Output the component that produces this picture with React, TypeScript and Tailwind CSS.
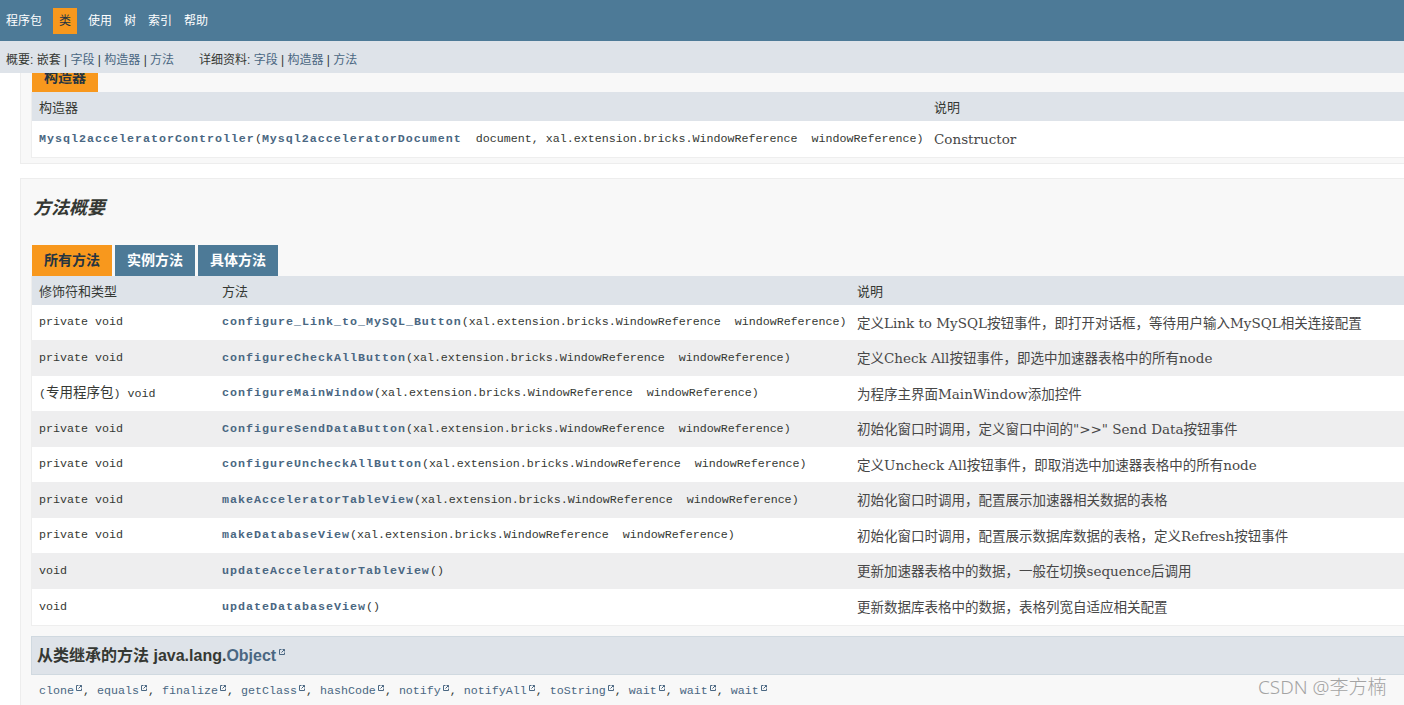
import React from "react";

const SANS = "font-['Liberation_Sans','Noto_Sans_CJK_SC',sans-serif]";
const MONO = "font-['Liberation_Mono','Noto_Sans_CJK_SC',monospace]";
const SERIF = "font-['DejaVu_Serif','Noto_Sans_CJK_SC',serif]";

const ExtIcon = ({ cls = "" }: { cls?: string }) => (
  <svg
    width="6"
    height="6"
    viewBox="0 0 6 6"
    fill="none"
    stroke="#4A6782"
    strokeWidth="1"
    className={"inline-block align-top " + cls}
  >
    <path d="M2.5 0.5H0.5V5.5H5.5V3.5" />
    <path d="M3.5 0.5H5.5V2.5" />
    <path d="M5.5 0.5L2.5 3.5" />
  </svg>
);

type Row = { type: string; name: string; params: string; desc: string; h: string; bg: string };

const P = "xal.extension.bricks.WindowReference  windowReference";

const rows: Row[] = [
  { type: "private void", name: "configure_Link_to_MySQL_Button", params: P, desc: "定义Link to MySQL按钮事件，即打开对话框，等待用户输入MySQL相关连接配置", h: "h-[35px]", bg: "bg-white" },
  { type: "private void", name: "configureCheckAllButton", params: P, desc: "定义Check All按钮事件，即选中加速器表格中的所有node", h: "h-[36px]", bg: "bg-[#eeeeef]" },
  { type: "(专用程序包) void", name: "configureMainWindow", params: P, desc: "为程序主界面MainWindow添加控件", h: "h-[35px]", bg: "bg-white" },
  { type: "private void", name: "ConfigureSendDataButton", params: P, desc: "初始化窗口时调用，定义窗口中间的\">>\" Send Data按钮事件", h: "h-[36px]", bg: "bg-[#eeeeef]" },
  { type: "private void", name: "configureUncheckAllButton", params: P, desc: "定义Uncheck All按钮事件，即取消选中加速器表格中的所有node", h: "h-[35px]", bg: "bg-white" },
  { type: "private void", name: "makeAcceleratorTableView", params: P, desc: "初始化窗口时调用，配置展示加速器相关数据的表格", h: "h-[36px]", bg: "bg-[#eeeeef]" },
  { type: "private void", name: "makeDatabaseView", params: P, desc: "初始化窗口时调用，配置展示数据库数据的表格，定义Refresh按钮事件", h: "h-[35px]", bg: "bg-white" },
  { type: "void", name: "updateAcceleratorTableView", params: "", desc: "更新加速器表格中的数据，一般在切换sequence后调用", h: "h-[36px]", bg: "bg-[#eeeeef]" },
  { type: "void", name: "updateDatabaseView", params: "", desc: "更新数据库表格中的数据，表格列宽自适应相关配置", h: "h-[36px]", bg: "bg-white" },
];

const inherited = ["clone", "equals", "finalize", "getClass", "hashCode", "notify", "notifyAll", "toString", "wait", "wait", "wait"];

export default function App() {
  return (
    <div className={"relative w-[1404px] h-[705px] overflow-hidden bg-white text-[#353833] " + SANS}>
      {/* top nav */}
      <div className="h-[41px] bg-[#4D7A97] flex items-center text-[12px] text-white">
        <span className="ml-[6px]">程序包</span>
        <span className="ml-[11px] h-[26px] px-[6px] flex items-center bg-[#F8981D] text-[#253441]">类</span>
        <span className="ml-[11px]">使用</span>
        <span className="ml-[12px]">树</span>
        <span className="ml-[12px]">索引</span>
        <span className="ml-[12px]">帮助</span>
      </div>
      {/* sub nav */}
      <div className="h-[32px] bg-[#dee3e9] flex items-center pt-[5px] text-[12px] text-[#353833]">
        <div className="ml-[6px] w-[193px] whitespace-pre">
          概要: 嵌套 | <span className="text-[#4A6782]">字段</span> | <span className="text-[#4A6782]">构造器</span> | <span className="text-[#4A6782]">方法</span>
        </div>
        <div className="whitespace-pre">
          详细资料: <span className="text-[#4A6782]">字段</span> | <span className="text-[#4A6782]">构造器</span> | <span className="text-[#4A6782]">方法</span>
        </div>
      </div>

      {/* content */}
      <div className="h-[632px] overflow-hidden">
        {/* constructor section */}
        <div className="w-[1500px] ml-[20px] -mt-[13px] border border-[#ededed] bg-[#f8f8f8] pl-[10px] pb-[5px]">
          <div className="ml-[1px] h-[31px] w-[66px] bg-[#F8981D] text-[#253441] text-[14px] font-bold flex items-center pl-[12px] pt-[1px]">
            构造器
          </div>
          <div className="w-[1420px] border border-t-0 border-[#eeeeee]">
            <div className="h-[29px] bg-[#dee3e9] flex items-center pt-[2px] text-[13px] text-[#353833]">
              <div className="w-[895px] pl-[7px]">构造器</div>
              <div className="pl-[7px]">说明</div>
            </div>
            <div className="h-[36px] bg-white flex items-center pt-[1px]">
              <div className={"w-[895px] pl-[7px] whitespace-pre text-[11.67px] " + MONO}>
                <span className="font-bold tracking-[1px] text-[#4A6782]">Mysql2acceleratorController</span>
                <span>(</span>
                <span className="font-bold tracking-[1px] text-[#4A6782]">Mysql2acceleratorDocument</span>
                <span>{"  document, xal.extension.bricks.WindowReference  windowReference)"}</span>
              </div>
              <div className={"pl-[7px] text-[13.5px] text-[#474747] " + SERIF}>Constructor</div>
            </div>
          </div>
        </div>

        {/* method summary section */}
        <div className="w-[1500px] ml-[20px] mt-[14px] border border-[#ededed] bg-[#f8f8f8] pl-[10px] pb-[5px]">
          <div className="pt-[17px] h-[39px] leading-[24px] text-[18px] font-bold italic text-[#353833] pl-[2px]">方法概要</div>
          <div className="mt-[27px] flex ml-[1px] gap-[3px] text-[14px] font-bold">
            <div className="h-[31px] w-[80px] bg-[#F8981D] text-[#253441] flex items-center pl-[12px]">所有方法</div>
            <div className="h-[31px] w-[80px] bg-[#4D7A97] text-white flex items-center pl-[12px]">实例方法</div>
            <div className="h-[31px] w-[80px] bg-[#4D7A97] text-white flex items-center pl-[12px]">具体方法</div>
          </div>
          <div className="w-[1420px] border border-t-0 border-[#eeeeee]">
            <div className="h-[29px] bg-[#dee3e9] flex items-center pt-[2px] text-[13px] text-[#353833]">
              <div className="w-[183px] pl-[7px]">修饰符和类型</div>
              <div className="w-[635px] pl-[7px]">方法</div>
              <div className="pl-[7px]">说明</div>
            </div>
            {rows.map((r, i) => (
              <div key={i} className={"flex items-center pt-[1px] " + r.h + " " + r.bg}>
                <div className={"w-[183px] pl-[7px] whitespace-pre text-[11.67px] text-[#353833] " + MONO}>
                  {r.type.startsWith("(") ? (
                    <>
                      (<span className="text-[13.5px]">专用程序包</span>) void
                    </>
                  ) : (
                    r.type
                  )}
                </div>
                <div className={"w-[635px] pl-[7px] whitespace-pre text-[11.67px] text-[#353833] " + MONO}>
                  <span className="font-bold tracking-[1px] text-[#4A6782]">{r.name}</span>
                  <span>({r.params})</span>
                </div>
                <div className={"pl-[7px] whitespace-pre text-[13.5px] text-[#474747] " + SERIF}>{r.desc}</div>
              </div>
            ))}
          </div>

          <div className="mt-[10px] w-[1420px] h-[39px] bg-[#dee3e9] border border-[#d0d9e0] flex items-center pl-[5px] text-[16px] font-bold text-[#353833]">
            <span>从类继承的方法 java.lang.</span>
            <span className="text-[#4A6782]">Object</span>
            <ExtIcon cls="ml-[3px] -mt-[8px]" />
          </div>
          <div className={"pt-[8px] pl-[8px] h-[40px] text-[11.67px] leading-[16px] whitespace-pre text-[#353833] " + MONO}>
            {inherited.map((m, i) => (
              <React.Fragment key={i}>
                <span className="text-[#4A6782]">{m}</span>
                <ExtIcon cls="ml-[2px] mr-[1px] mt-[2px]" />
                {i < inherited.length - 1 ? ", " : ""}
              </React.Fragment>
            ))}
          </div>
        </div>
      </div>

      <div className="absolute left-[1258px] top-[674px] text-[19px] font-light text-[#a3a3a3] font-['Noto_Sans','Noto_Sans_CJK_SC',sans-serif] leading-[26px] whitespace-pre">
        CSDN @李方楠
      </div>
    </div>
  );
}
